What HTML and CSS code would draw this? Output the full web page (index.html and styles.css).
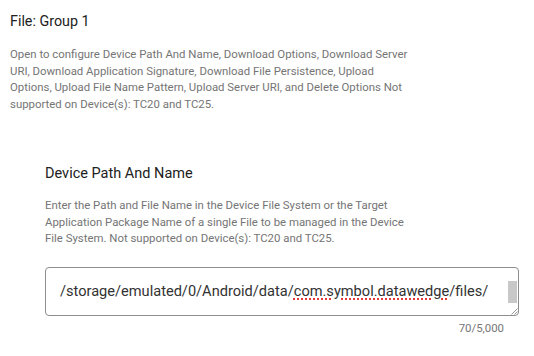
FILE: index.html
```html
<!DOCTYPE html>
<html>
<head>
<meta charset="utf-8">
<link rel="stylesheet" href="styles.css">
</head>
<body>
<div class="page">
  <h2 class="title">File: Group 1</h2>
  <p class="desc">Open to configure Device Path And Name, Download Options, Download Server URI, Download Application Signature, Download File Persistence, Upload Options, Upload File Name Pattern, Upload Server URI, and Delete Options Not supported on Device(s): TC20 and TC25.</p>
  <div class="section">
    <h3 class="subtitle">Device Path And Name</h3>
    <p class="desc desc-sub">Enter the Path and File Name in the Device File System or the Target Application Package Name of a single File to be managed in the Device File System. Not supported on Device(s): TC20 and TC25.</p>
    <div class="field">
      <div class="field-text">/storage/emulated/0/Android/data/<span class="misspelled">com.symbol.datawedge</span>/files/</div>
      <div class="thumb"></div>
      <svg class="grip" width="8" height="8" viewBox="0 0 8 8"><path d="M7.5 1.5 L1.5 7.5 M7.5 4.5 L4.5 7.5" stroke="#9a9a9a" stroke-width="1" fill="none"/></svg>
    </div>
    <div class="counter">70/5,000</div>
  </div>
</div>
</body>
</html>
```

FILE: styles.css
```css
html, body {
  margin: 0;
  padding: 0;
  background: #ffffff;
}
body {
  font-family: Roboto, "Liberation Sans", Arial, sans-serif;
  width: 534px;
  height: 356px;
  overflow: hidden;
}
.page {
  padding: 13px 10px 0 10px;
}
.title {
  margin: 0;
  font-size: 14.3px;
  font-weight: 400;
  line-height: 17px;
  color: #212121;
}
.desc {
  margin: 16px 0 0 0;
  width: 400px;
  font-size: 11.4px;
  line-height: 16.5px;
  color: #757575;
}
.section {
  margin-left: 35px;
  margin-top: 53px;
}
.subtitle {
  margin: 0;
  font-size: 14.5px;
  font-weight: 400;
  line-height: 18px;
  color: #212121;
}
.desc-sub {
  margin-top: 14px;
  width: 362px;
}
.field {
  position: relative;
  margin-top: 20px;
  width: 472px;
  height: 47px;
  border: 1px solid #8e8e8e;
  border-radius: 4px;
  overflow: hidden;
}
.field-text {
  padding: 14px 0 0 14px;
  font-size: 14.6px;
  line-height: 18px;
  color: #333333;
  white-space: nowrap;
}
.misspelled {
  text-decoration: underline dotted #e53935;
  text-decoration-thickness: 1.5px;
  text-underline-offset: 3px;
}
.thumb {
  position: absolute;
  right: 1px;
  top: 13px;
  width: 9px;
  height: 22px;
  background: #c8c8c8;
}
.grip {
  position: absolute;
  right: 0;
  bottom: 0;
}
.counter {
  width: 474px;
  box-sizing: border-box;
  padding-right: 15px;
  margin-top: 5px;
  text-align: right;
  font-size: 11.4px;
  line-height: 14px;
  color: #757575;
}
```
